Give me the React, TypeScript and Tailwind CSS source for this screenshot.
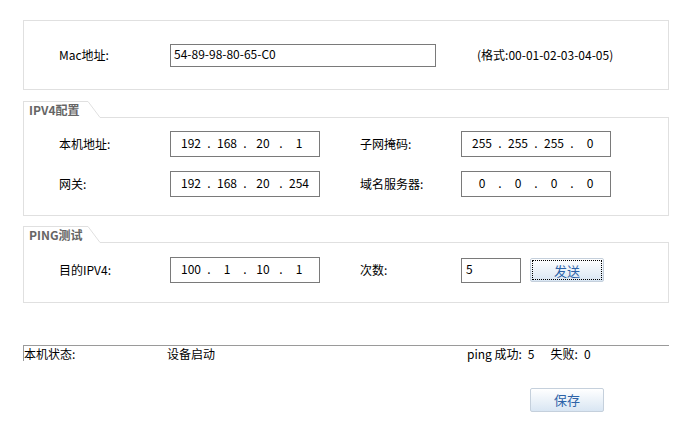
import React from 'react'

const font = { fontFamily: '"Noto Sans CJK SC", "Liberation Sans", sans-serif' }

interface IpProps {
  parts: string[]
}

const IpInput: React.FC<IpProps> = ({ parts }) => (
  <div className="flex items-center h-[26px] w-[150px] border border-[#7a7a7a] bg-white pl-[7px] pb-[2px] text-[12px] text-black">
    {parts.map((p, i) => (
      <React.Fragment key={i}>
        <span className="w-[26px] text-center leading-none">{p}</span>
        {i < parts.length - 1 && <span className="w-[10px] text-center leading-none">.</span>}
      </React.Fragment>
    ))}
  </div>
)

const Legend: React.FC<{ title: string }> = ({ title }) => (
  <div className="flex items-stretch h-[17px]">
    <div className="w-[65px] border-t border-l border-[#e0e0e0] pl-[5px] pt-[1px] text-[12px] font-bold text-[#666666] leading-[14px]">
      {title}
    </div>
    <svg width="12" height="17" className="block">
      <line x1="0" y1="0.5" x2="12" y2="16.5" stroke="#e0e0e0" strokeWidth="1" />
    </svg>
    <div className="flex-1 border-b border-[#e0e0e0]"></div>
  </div>
)

const Label: React.FC<{ children: React.ReactNode }> = ({ children }) => (
  <div className="text-[12px] text-black leading-none">{children}</div>
)

const Button: React.FC<{ children: React.ReactNode; focused?: boolean }> = ({ children, focused }) => (
  <button
    className={`w-[74px] h-[24px] rounded-[2px] border border-[#c5d0dc] bg-gradient-to-b from-[#ffffff] to-[#d9e6f3] text-[13px] text-[#2d63a8] leading-none ${
      focused ? 'outline-1 outline-dotted outline-black outline-offset-[-3px]' : ''
    }`}
  >
    {children}
  </button>
)

export default function App() {
  return (
    <div className="w-[694px] h-[427px] bg-white pl-[23px] pr-[25px]" style={font}>
      {/* Mac */}
      <div className="mt-[20px] h-[70px] border border-[#e0e0e0] flex items-center pl-[35px]">
        <div className="w-[111px]">
          <Label>Mac地址:</Label>
        </div>
        <div className="w-[266px] h-[23px] border border-[#7a7a7a] flex items-center pl-[3px] pb-[2px] text-[12px] text-black">
          54-89-98-80-65-C0
        </div>
        <div className="ml-[41px] text-[12px] text-black">(格式:00-01-02-03-04-05)</div>
      </div>

      {/* IPV4 */}
      <div className="mt-[11px]">
        <Legend title="IPV4配置" />
        <div className="border-l border-r border-b border-[#e0e0e0] pl-[35px] pt-[13px] pb-[18px] grid grid-cols-[111px_150px_40px_101px_150px] gap-y-[14px] items-center">
          <Label>本机地址:</Label>
          <IpInput parts={['192', '168', '20', '1']} />
          <div></div>
          <Label>子网掩码:</Label>
          <IpInput parts={['255', '255', '255', '0']} />
          <Label>网关:</Label>
          <IpInput parts={['192', '168', '20', '254']} />
          <div></div>
          <Label>域名服务器:</Label>
          <IpInput parts={['0', '0', '0', '0']} />
        </div>
      </div>

      {/* PING */}
      <div className="mt-[10px]">
        <Legend title="PING测试" />
        <div className="border-l border-r border-b border-[#e0e0e0] pl-[35px] pt-[14px] pb-[19px] grid grid-cols-[111px_150px_40px_101px_auto] items-center">
          <Label>目的IPV4:</Label>
          <IpInput parts={['100', '1', '10', '1']} />
          <div></div>
          <Label>次数:</Label>
          <div className="flex items-center gap-[9px]">
            <div className="w-[60px] h-[25px] border border-[#7a7a7a] flex items-center pl-[4px] pb-[2px] text-[12px] text-black">5</div>
            <Button focused>发送</Button>
          </div>
        </div>
      </div>

      {/* Status */}
      <div className="mt-[42px] border-t border-[#9a9a9a] flex items-start h-[16px] text-[12px] text-black leading-[15px]">
        <div className="w-[144px] h-[15px] border-l border-[#9a9a9a]">本机状态:</div>
        <div className="w-[300px]">设备启动</div>
        <div className="flex">
          <span>ping 成功:</span>
          <span className="ml-[6px]">5</span>
          <span className="ml-[16px]">失败:</span>
          <span className="ml-[6px]">0</span>
        </div>
      </div>

      <div className="mt-[25px] pl-[507px]">
        <Button>保存</Button>
      </div>
    </div>
  )
}
